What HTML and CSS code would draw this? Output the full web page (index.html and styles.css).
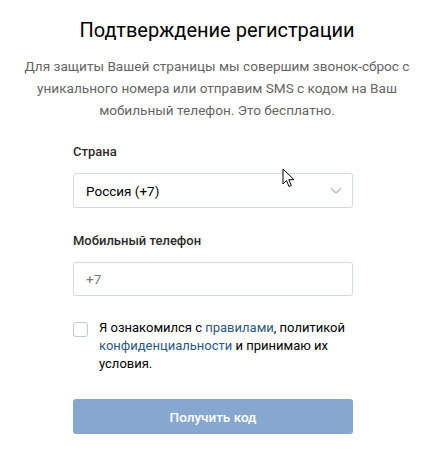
FILE: index.html
```html
<!DOCTYPE html>
<html lang="ru">
<head>
  <meta charset="UTF-8" />
  <title>Подтверждение регистрации</title>
  <link rel="stylesheet" href="styles.css">
</head>
<body>
  <div class="box">
    <h1 class="title">Подтверждение регистрации</h1>
    <p class="desc">Для защиты Вашей страницы мы совершим звонок-сброс с уникального номера или отправим SMS с кодом на Ваш мобильный телефон. Это бесплатно.</p>

    <div class="form">
      <div class="label">Страна</div>
      <div class="select">
        <span>Россия (+7)</span>
        <svg class="chev" width="12" height="7" viewBox="0 0 12 7"><path d="M1 1l5 5 5-5" fill="none" stroke="#b4bcc6" stroke-width="1.3"/></svg>
      </div>

      <div class="label label-phone">Мобильный телефон</div>
      <div class="input">+7</div>

      <label class="agree">
        <span class="check"></span>
        <span>Я ознакомился с <a href="#">правилами</a>, политикой <a href="#">конфиденциальности</a> и принимаю их условия.</span>
      </label>

      <button class="btn">Получить код</button>
    </div>
  </div>

  <svg class="cursor" width="14" height="21" viewBox="0 0 14 21"><path d="M1 1v15l3.5-3.5 2.5 6 2.3-1-2.5-5.8H12z" fill="#fff" stroke="#000" stroke-width="1"/></svg>
</body>
</html>
```

FILE: styles.css
```css
body {
  margin: 0;
  font-family: Roboto, "Open Sans", sans-serif;
  background: #fff;
  color: #000;
}
.box {
  width: 434px;
  padding-top: 16px;
}
.title {
  margin: 0;
  font-size: 20px;
  font-weight: 400;
  line-height: 28px;
  text-align: center;
  color: #000;
}
.desc {
  margin: 11px 0 0;
  padding: 0 10px;
  font-size: 13.6px;
  line-height: 22px;
  text-align: center;
  color: #656565;
}
.form {
  width: 280px;
  margin: 23px 0 0 73px;
}
.label {
  font-size: 13px;
  font-weight: 500;
  color: #2b2b2b;
  line-height: 16px;
}
.label-phone {
  margin-top: 25px;
}
.select, .input {
  box-sizing: border-box;
  height: 35px;
  margin-top: 13px;
  border: 1px solid #d3d9de;
  border-radius: 3px;
  padding: 0 12px;
  display: flex;
  align-items: center;
  font-size: 13.5px;
}
.select {
  justify-content: space-between;
  color: #000;
}
.chev {
  margin-right: -2px;
}
.input {
  height: 34px;
  margin-top: 13px;
  color: #7a7a7a;
}
.agree {
  display: flex;
  gap: 11px;
  margin-top: 23px;
  font-size: 13px;
  line-height: 18px;
  color: #000;
}
.check {
  flex: none;
  box-sizing: border-box;
  width: 15px;
  height: 15px;
  margin-top: 3px;
  border: 1px solid #c1c9d1;
  border-radius: 3px;
}
.agree a {
  color: #2a5885;
  text-decoration: none;
}
.btn {
  display: block;
  width: 100%;
  height: 35px;
  margin-top: 26px;
  border: none;
  border-radius: 3px;
  background: #87a8ce;
  color: #fff;
  font-family: inherit;
  font-size: 13.5px;
  font-weight: 500;
}
.cursor {
  position: absolute;
  left: 282px;
  top: 168px;
}
```
